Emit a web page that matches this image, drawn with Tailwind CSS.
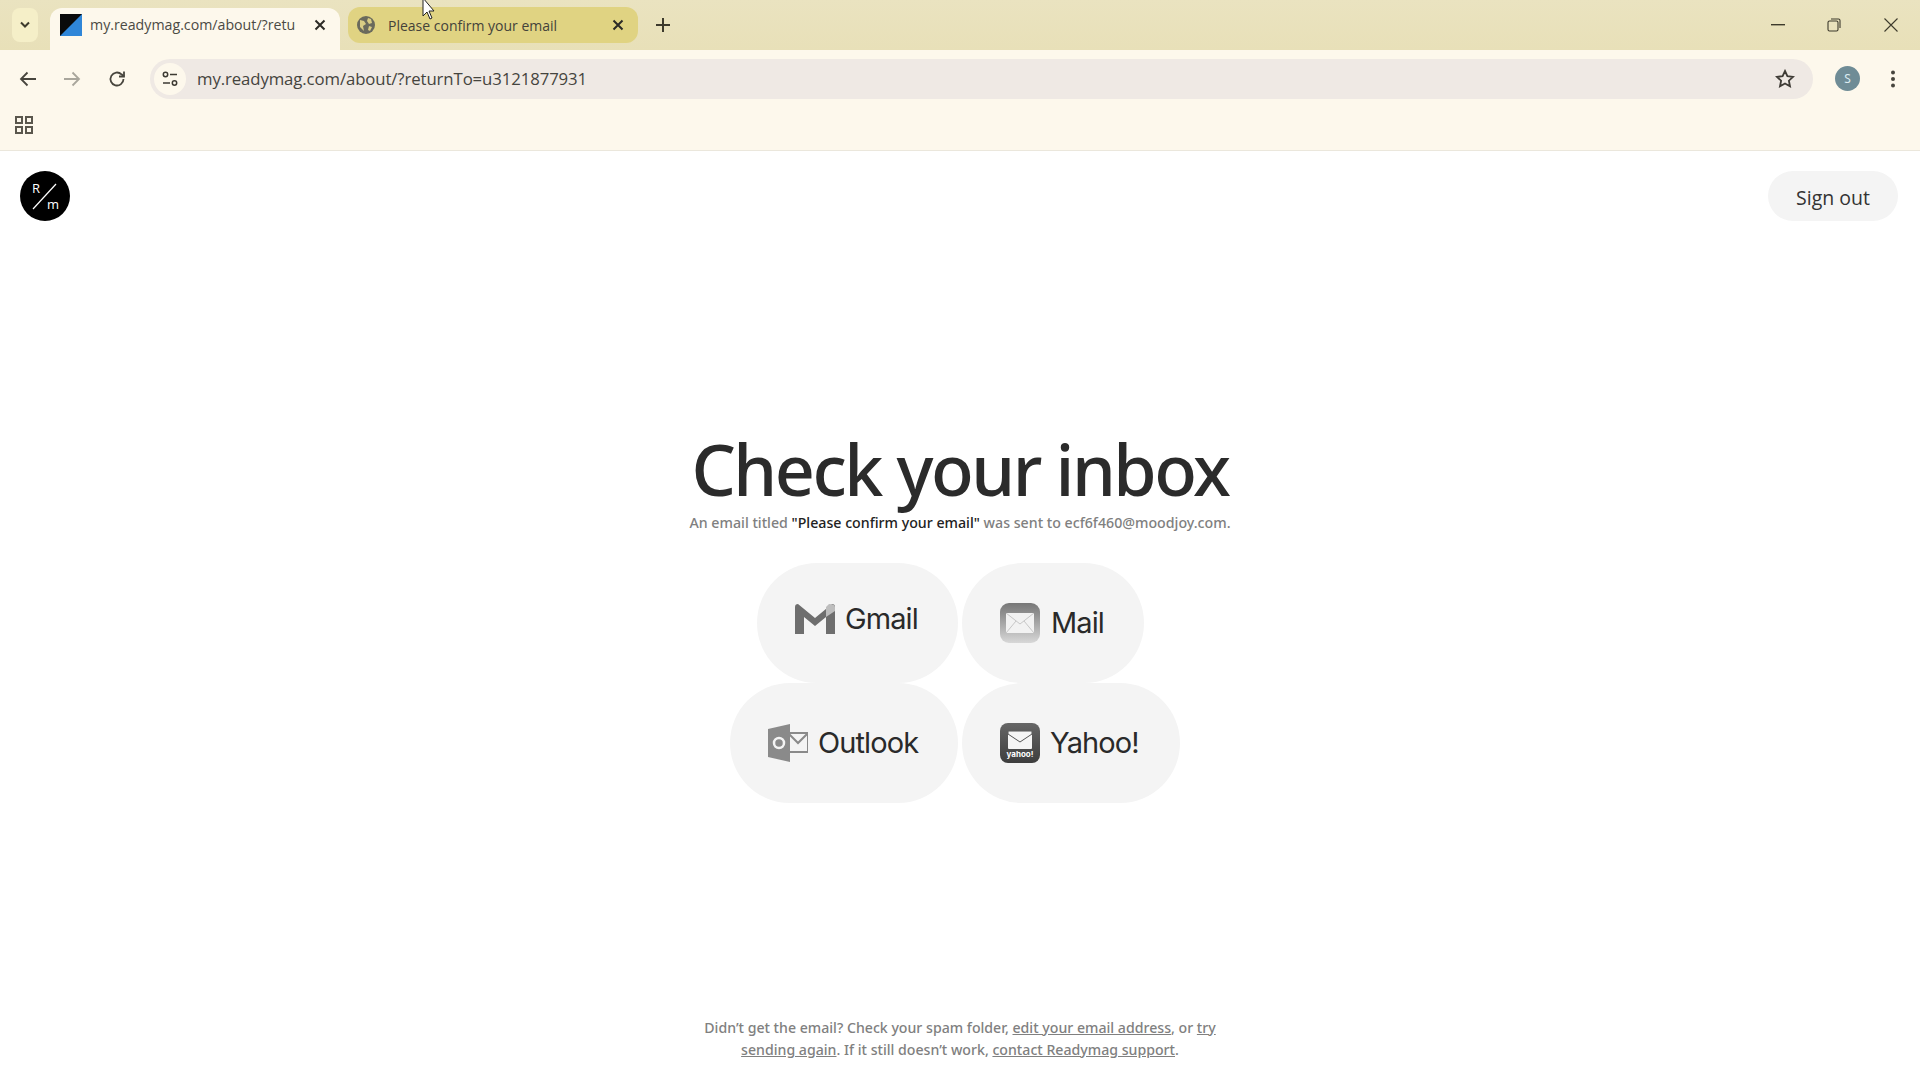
<!DOCTYPE html>
<html lang="en"><head><meta charset="utf-8"><title>Check your inbox</title>
<script src="https://cdn.jsdelivr.net/npm/@tailwindcss/browser@4"></script></head>
<body class="w-[1920px] h-[1080px] overflow-hidden bg-white font-['Noto_Sans',sans-serif] text-[#2b2b2b] flex flex-col relative">
<!-- tab strip -->
<div class="h-[50px] bg-gradient-to-b from-[#eae3c0] to-[#e8e0b8] flex items-center shrink-0 relative">
  <div class="w-[26px] h-[34px] ml-[12px] rounded-lg bg-[#f5efc8] flex items-center justify-center">
    <svg width="12" height="8" viewBox="0 0 12 8" fill="none" stroke="#3d3a2c" stroke-width="2"><path d="M2 1.5l4 4 4-4"/></svg>
  </div>
  <div class="w-[290px] h-[42px] mt-[8px] ml-[12px] rounded-t-xl bg-[#fdf8ec] flex items-center pl-[5px] pr-[14px] pb-[8px]">
    <svg width="22" height="22" viewBox="0 0 22 22" class="ml-[5px] shrink-0"><rect width="22" height="22" fill="#0a0a0a"/><path d="M22 0v22H0z" fill="#2f86d8"/></svg>
    <span class="ml-[8px] w-[208px] overflow-hidden whitespace-nowrap text-[14.2px] text-[#4b4a44] font-['Open_Sans',sans-serif]">my.readymag.com/about/?retu</span>
    <svg width="12" height="12" viewBox="0 0 12 12" class="ml-auto shrink-0" stroke="#2c2b26" stroke-width="2"><path d="M1.5 1.5l9 9M10.5 1.5l-9 9"/></svg>
  </div>
  <div class="w-[290px] h-[36px] ml-[8px] rounded-xl bg-[#e0d382] flex items-center pl-[9px] pr-[14px]">
    <svg width="18" height="18" viewBox="0 0 18 18"><circle cx="9" cy="9" r="9" fill="#6a6a5c"/><path d="M3 4l4 1 2 3-3 2 1 5-4-4zM11 2l3 1 1 4-3 1-2-3zM12 10l3 1-2 4-2-1z" fill="#d8cc84"/></svg>
    <span class="ml-[13px] text-[14px] text-[#44423a] font-['Open_Sans',sans-serif] whitespace-nowrap">Please confirm your email</span>
    <svg width="12" height="12" viewBox="0 0 12 12" class="ml-auto" stroke="#2c2b26" stroke-width="2"><path d="M1.5 1.5l9 9M10.5 1.5l-9 9"/></svg>
  </div>
  <svg width="14" height="14" viewBox="0 0 14 14" class="ml-[18px]" stroke="#3d3a2c" stroke-width="2"><path d="M7 0v14M0 7h14"/></svg>
  <div class="ml-auto flex items-center">
    <svg width="14" height="2" viewBox="0 0 14 2" class="mr-[42px]"><rect width="14" height="1.4" fill="#3d3a2c"/></svg>
    <svg width="14" height="14" viewBox="0 0 14 14" fill="none" stroke="#3d3a2c" stroke-width="1.1" class="mr-[43px]"><rect x="1" y="3" width="10" height="10" rx="1.5"/><path d="M4 1h7.5A1.5 1.5 0 0 1 13 2.500V10"/></svg>
    <svg width="14" height="14" viewBox="0 0 14 14" stroke="#3d3a2c" stroke-width="1.1" class="mr-[22px]"><path d="M0.500 0.500l13 13M13.500 0.500l-13 13"/></svg>
  </div>
</div>
<!-- toolbar -->
<div class="h-[57px] bg-[#fdf8ec] flex items-center shrink-0">
  <svg width="18" height="16" viewBox="0 0 18 16" fill="none" stroke="#47453d" stroke-width="1.800" class="ml-[19px]"><path d="M17 8H2M8.500 1.500L2 8l6.500 6.500"/></svg>
  <svg width="18" height="16" viewBox="0 0 18 16" fill="none" stroke="#a9a69c" stroke-width="1.800" class="ml-[26px]"><path d="M1 8h15M9.500 1.500L16 8l-6.500 6.500"/></svg>
  <svg width="18" height="18" viewBox="0 0 18 18" fill="none" stroke="#47453d" stroke-width="1.800" class="ml-[27px]"><path d="M15.500 9a6.500 6.500 0 1 1-2-4.700L16 6.500"/><path d="M16 1.500v5h-5"/></svg>
  <div class="ml-[24px] w-[1663px] h-[40px] rounded-full bg-[#efe9e4] flex items-center pl-[4px] pr-[18px]">
    <div class="w-[32px] h-[32px] rounded-full bg-[#fdf8ec] flex items-center justify-center">
      <svg width="16" height="16" viewBox="0 0 16 16" fill="none" stroke="#3d3a33" stroke-width="1.500"><circle cx="3.500" cy="3.500" r="2.200"/><path d="M8 3.500h7M1 12h7"/><circle cx="12.500" cy="12" r="2.200"/></svg>
    </div>
    <span class="ml-[11px] text-[16.750px] text-[#45443e] font-['Open_Sans',sans-serif] tracking-[-0.1px]">my.readymag.com/about/?returnTo=u3121877931</span>
    <svg width="20" height="19" viewBox="0 0 20 19" fill="none" stroke="#3f3c36" stroke-width="1.800" class="ml-auto"><path d="M10 2l2.400 5.200 5.600.7-4.100 3.800 1.100 5.600L10 14.500 5 17.300l1.100-5.600L2 7.900l5.600-.7z"/></svg>
  </div>
  <div class="ml-[22px] w-[25px] h-[25px] rounded-full bg-[#6f8c96] flex items-center justify-center text-[12px] text-[#dcecf2]">S</div>
  <svg width="6" height="18" viewBox="0 0 6 18" class="ml-[30px]" fill="#47453d"><circle cx="3" cy="2.500" r="2"/><circle cx="3" cy="9" r="2"/><circle cx="3" cy="15.500" r="2"/></svg>
</div>
<!-- bookmarks -->
<div class="h-[44px] bg-[#fdf8ec] border-b border-[#ebe7dc] flex items-center shrink-0 pb-[7px]">
  <svg width="18" height="18" viewBox="0 0 18 18" fill="none" stroke="#5a574d" stroke-width="2" class="ml-[15px]"><rect x="1" y="1" width="6" height="6"/><rect x="11" y="1" width="6" height="6"/><rect x="1" y="11" width="6" height="6"/><rect x="11" y="11" width="6" height="6"/></svg>
</div>
<!-- page -->
<div class="flex-1 flex flex-col relative">
  <div class="flex justify-between items-start pl-[20px] pr-[20px] pt-[20px] h-[120px]">
    <div class="relative w-[50px] h-[50px] rounded-full bg-black text-white text-[13px] leading-[16px] font-['Open_Sans',sans-serif]">
      <span class="absolute left-[12px] top-[9px]">R</span>
      <span class="absolute left-[27px] top-[25px]">m</span>
      <svg width="50" height="50" viewBox="0 0 50 50" class="absolute inset-0" stroke="#fff" stroke-width="1.200"><path d="M13 38L36 13"/></svg>
    </div>
    <div class="w-[130px] h-[50px] rounded-full bg-[#f4f4f4] flex items-center justify-center text-[19.5px] text-[#333] mr-[2px] pt-[3px] font-['Open_Sans',sans-serif]">Sign out</div>
  </div>
  <h1 class="mt-[156px] text-center text-[70px] leading-[84px] font-medium tracking-[-2.5px] text-[#2b2b2b]">Check your inbox</h1>
  <p class="mt-[1px] text-center text-[14.200px] leading-[22px] text-[#808080] font-medium">An email titled <span class="text-[#222]">"Please confirm your email"</span> was sent to ecf6f460@moodjoy.com.</p>
  <div class="mt-[29px] grid grid-cols-[1fr_1fr] gap-x-[4px] gap-y-[0px] font-['Inter',sans-serif] text-[29px] text-[#2a2a2a]">
    <div class="justify-self-end w-[201px] h-[120px] rounded-full bg-[#f4f4f4] flex items-center pl-[38px] pb-[8px]">
      <svg width="40" height="30" viewBox="0 0 40 30"><path d="M0 3q0-3 3-3l17 14L37 0q3 0 3 3v27h-9V13L20 22 9 13v17H0z" fill="#6e6e6e"/><path d="M31 13V3l3-3q6 0 6 3v4z" fill="#bdbdbd"/></svg>
      <span class="ml-[10px] tracking-[-0.9px]">Gmail</span>
    </div>
    <div class="w-[182px] h-[120px] rounded-full bg-[#f4f4f4] flex items-center pl-[38px]">
      <div class="w-[40px] h-[40px] rounded-[9px] bg-gradient-to-b from-[#777] to-[#d8d8d8] flex items-center justify-center">
        <svg width="28" height="20" viewBox="0 0 28 20"><rect width="28" height="20" fill="#f2f2f2"/><path d="M0 0l14 11L28 0M0 20l10-12M28 20L18 8" fill="none" stroke="#bbb" stroke-width=".8"/></svg>
      </div>
      <span class="ml-[11px] tracking-[-0.9px]">Mail</span>
    </div>
    <div class="justify-self-end w-[228px] h-[120px] rounded-full bg-[#f4f4f4] flex items-center pl-[38px]">
      <svg width="40" height="38" viewBox="0 0 40 38"><rect x="20" y="9" width="20" height="19" fill="#f4f4f4" stroke="#8a8a8a" stroke-width="2"/><path d="M20 9l10 10L40 9" fill="none" stroke="#8a8a8a" stroke-width="2"/><path d="M0 5L22 0v38L0 33z" fill="#8a8a8a"/><circle cx="11" cy="19" r="5" fill="none" stroke="#f4f4f4" stroke-width="2.500"/></svg>
      <span class="ml-[10px] tracking-[-0.9px]">Outlook</span>
    </div>
    <div class="w-[218px] h-[120px] rounded-full bg-[#f4f4f4] flex items-center pl-[38px]">
      <div class="w-[40px] h-[40px] rounded-[8px] bg-gradient-to-b from-[#666] to-[#3e3e3e] flex flex-col items-center">
        <svg width="24" height="18" viewBox="0 0 24 18" class="mt-[8px]"><rect width="24" height="18" rx="1" fill="#f5f5f5"/><path d="M0 0h24v3L12 11 0 3z" fill="#f5f5f5" stroke="#555" stroke-width="1"/></svg>
        <span class="text-[8px] leading-[10px] font-bold text-white">yahoo!</span>
      </div>
      <span class="ml-[10px] tracking-[-0.9px]">Yahoo!</span>
    </div>
  </div>
  <p class="mt-auto mb-[19px] mx-auto w-[520px] text-center text-[14.150px] leading-[22px] text-[#808080] font-medium">Didn’t get the email? Check your spam folder, <u>edit your email address</u>, or <u>try sending again</u>. If it still doesn’t work, <u>contact Readymag support</u>.</p>
</div>
<!-- cursor -->
<svg width="14" height="20" viewBox="0 0 14 20" class="absolute left-[422px] top-0"><path d="M1 -2v18l4-4 3 7 2-1-3-7h5z" fill="#fff" stroke="#222" stroke-width="1"/></svg>
</body></html>
